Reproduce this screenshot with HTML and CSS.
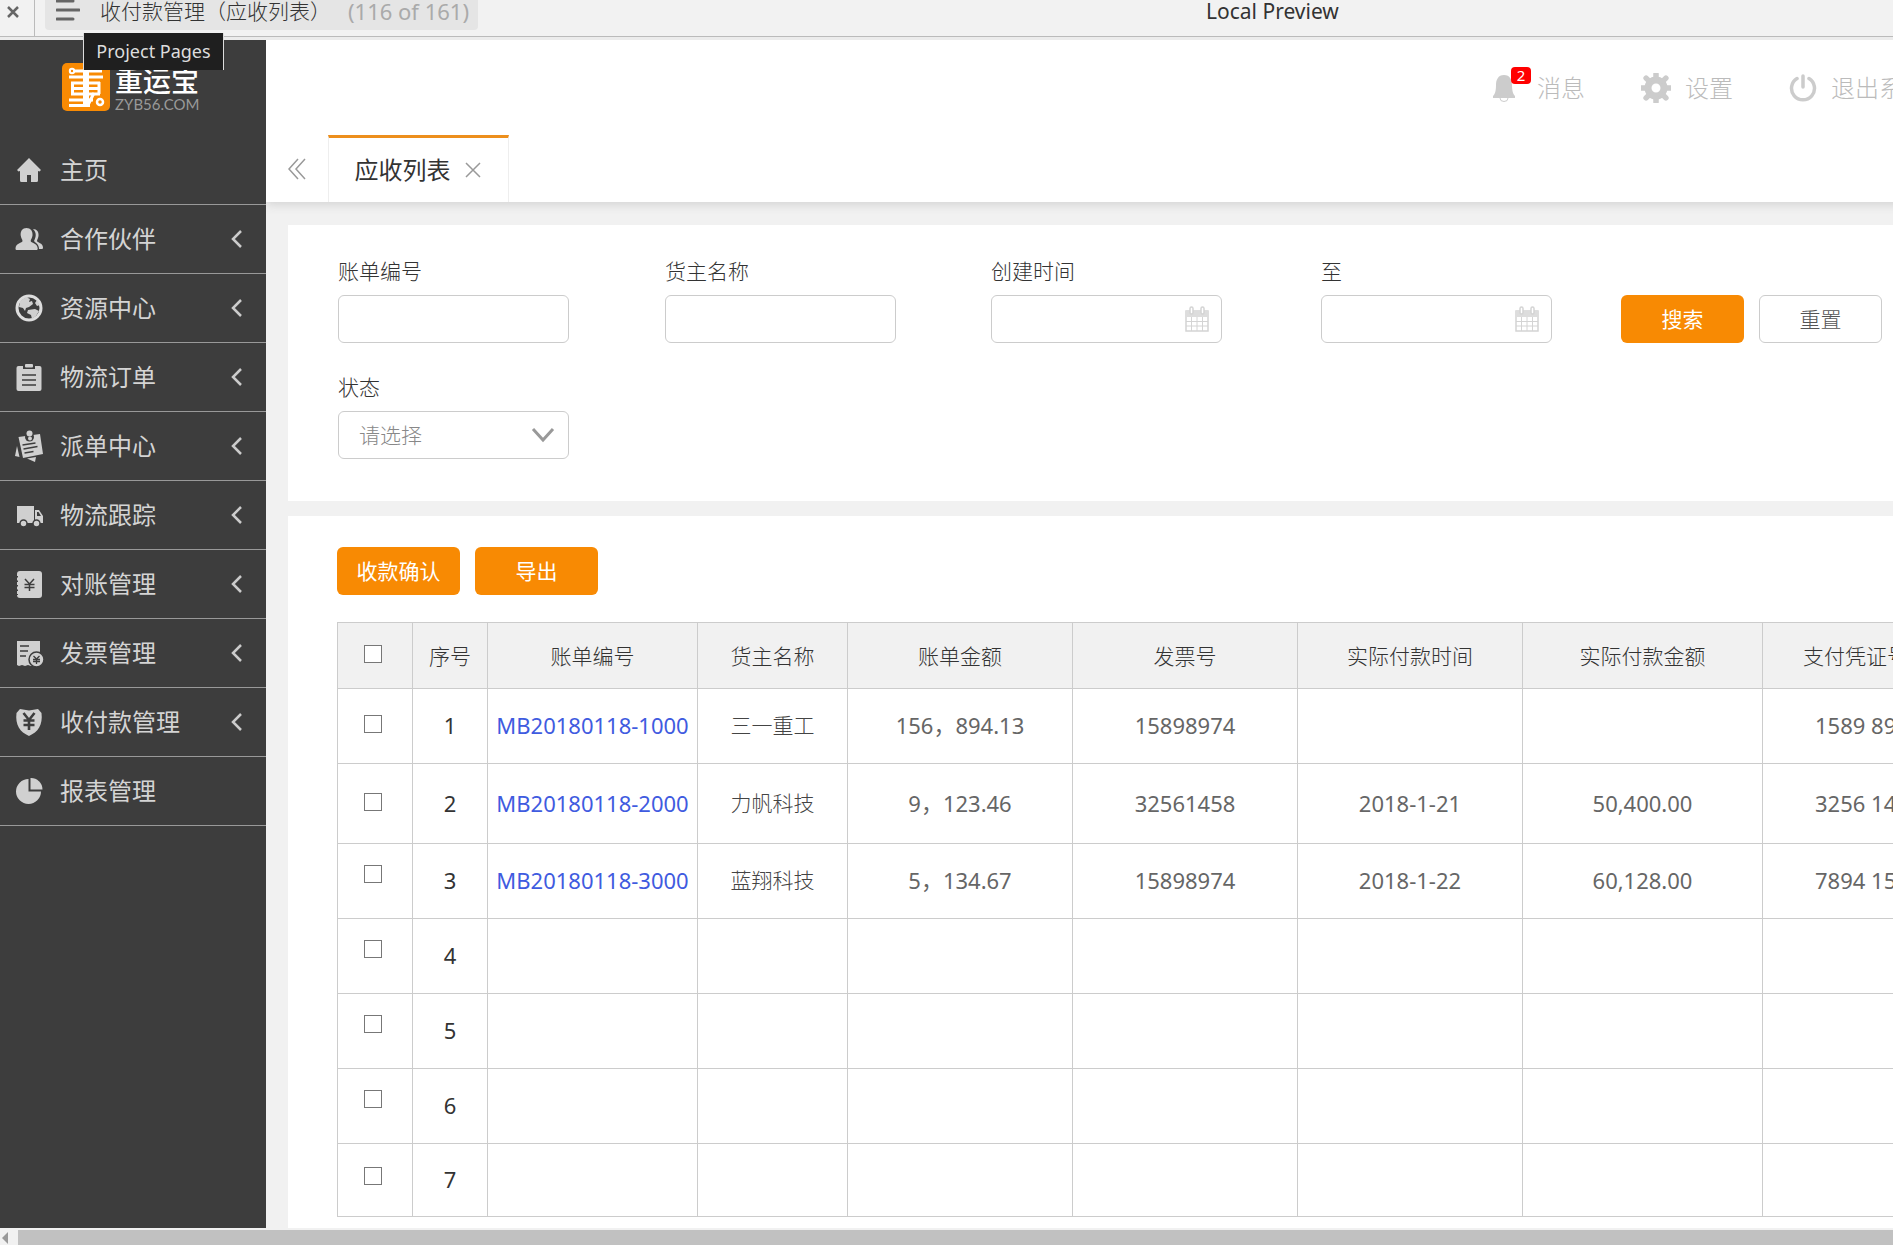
FILE: index.html
```html
<!DOCTYPE html>
<html lang="zh-CN">
<head>
<meta charset="utf-8">
<title>收付款管理（应收列表）</title>
<link rel="stylesheet" href="styles.css">
</head>
<body>
<div class="app">
  <header class="topbar">
    <button class="close" aria-label="关闭"><svg width="14" height="14" viewBox="0 0 14 14"><path d="M2 2l10 10M12 2L2 12" stroke="#666" stroke-width="2.5"/></svg></button>
    <div class="pages">
      <button class="pages-button" aria-describedby="pages-tip">
        <svg width="24" height="24" viewBox="0 0 24 24"><path d="M1 3h16M1 12h22M1 21h16" stroke="#666" stroke-width="3" stroke-linecap="round"/></svg>
        <span>收付款管理（应收列表）</span>
        <span class="count">(116 of 161)</span>
      </button>
      <div class="tooltip" id="pages-tip" role="tooltip">Project Pages</div>
    </div>
    <h1 class="preview-title">Local Preview</h1>
  </header>

  <div class="body">
    <aside class="sidebar">
      <div class="logo">
        <svg width="48" height="48" viewBox="0 0 48 48">
          <rect width="48" height="48" rx="5" fill="#f88a03"/>
          <g fill="none" stroke="#fff" stroke-width="3">
            <path d="M12 8h28M7 14h34M9 20h29M9 25.500h29M9 31h29M7 37h24M7 42.500h21"/>
            <path d="M24 6v36" stroke-width="6"/>
            <path d="M10.500 19v12M37 19v12M32 30l-6 12"/>
            <circle cx="10" cy="8" r="2.200" stroke-width="2"/>
            <circle cx="38" cy="39" r="3" stroke-width="2.500"/>
          </g>
        </svg>
        <div class="logo-text"><span class="logo-name">重运宝</span><span class="logo-site">ZYB56.COM</span></div>
      </div>
      <nav class="menu">
        <a href="#"><svg class="icon" viewBox="0 0 28 28"><path d="M14 2L2 14l1.500 1.500L5 15v9.500a1.500 1.500 0 0 0 1.500 1.500H12v-7h4v7h5.500a1.500 1.500 0 0 0 1.500-1.500V15l1.500.500L26 14z"/></svg><span>主页</span></a>
        <a href="#"><svg class="icon" viewBox="0 0 28 28"><path d="M18 4c4 0 6 3 5.500 7-.3 2.300-1.500 4-1.500 5 0 1.500 6 2 6 6.500 0 1-.5 1.500-1.500 1.500H24c0-5-3.500-6-5-8 2-4 3-8-1-12z"/><path d="M11.500 3c4 0 6.500 3 6 7.500-.3 2.500-1.800 4-1.800 5.500 0 2 7 2 7 7.500 0 1-.5 1.500-1.500 1.500H2c-1 0-1.500-.5-1.500-1.500C.500 18 7.500 18 7.500 16c0-1.500-1.500-3-1.800-5.500C5.200 6 7.500 3 11.500 3z"/></svg><span>合作伙伴</span><svg class="arrow" viewBox="0 0 12 20"><path d="M11 2L3 10l8 8"/></svg></a>
        <a href="#"><svg class="icon" viewBox="0 0 28 28"><circle cx="14" cy="14" r="12" fill="none" stroke="#ddd" stroke-width="3"/><path d="M5 7l6-4 4 2-1 3 3-1 1 3-4 3-3 1-1 3-2-3-4-1zM13 16l7-1 4 2-3 5-4 3-1-4-4-2zM22 6l3 5-3 1-2-3z"/></svg><span>资源中心</span><svg class="arrow" viewBox="0 0 12 20"><path d="M11 2L3 10l8 8"/></svg></a>
        <a href="#"><svg class="icon" viewBox="0 0 28 28"><rect x="1.500" y="3" width="25" height="25" rx="2"/><path d="M8 0h12v6H8z" fill="#3d3d3d"/><rect x="10" y="1" width="8" height="3.500" rx="1"/><path d="M7 12h14M7 17h14M7 22h14" stroke="#3d3d3d" stroke-width="1.500"/></svg><span>物流订单</span><svg class="arrow" viewBox="0 0 12 20"><path d="M11 2L3 10l8 8"/></svg></a>
        <a href="#"><svg class="icon" viewBox="0 0 28 28"><path d="M3.500 5L25 2l3 20-20 4zM2 14l2.500 11L0 24zM12 26.500l9-1.500-1 5z"/><circle cx="14.500" cy="5" r="4.500" fill="#3d3d3d"/><circle cx="14.500" cy="1.500" r="3"/><circle cx="15" cy="6.500" r="2"/><path d="M7.500 13l13-2M8.500 17l14-2.500M9.500 21l9-1.500" stroke="#3d3d3d" stroke-width="1.300"/></svg><span>派单中心</span><svg class="arrow" viewBox="0 0 12 20"><path d="M11 2L3 10l8 8"/></svg></a>
        <a href="#"><svg class="icon" viewBox="0 0 28 28"><path d="M2 5h17v17H2zM20 9h4l4 6v7h-8z"/><path d="M22 11h1.500l2.500 4h-4z" fill="#3d3d3d"/><g stroke="#3d3d3d" stroke-width="1.500"><circle cx="8.500" cy="22.500" r="3.500"/><circle cx="21.500" cy="22.500" r="3.500"/></g></svg><span>物流跟踪</span><svg class="arrow" viewBox="0 0 12 20"><path d="M11 2L3 10l8 8"/></svg></a>
        <a href="#"><svg class="icon" viewBox="0 0 28 28"><rect x="2" y="1" width="25" height="27" rx="3"/><path d="M2 6v19" stroke="#3d3d3d" stroke-width="2" stroke-dasharray="1.500 3"/><path d="M10 9l4.500 5L19 9M14.500 14v7M9.500 14.500h10M9.500 17.500h10" fill="none" stroke="#3d3d3d" stroke-width="1.500"/></svg><span>对账管理</span><svg class="arrow" viewBox="0 0 12 20"><path d="M11 2L3 10l8 8"/></svg></a>
        <a href="#"><svg class="icon" viewBox="0 0 28 28"><path d="M2 2h23v24l-3 1-3-1-3 1-3-1-3 1-3-1-3 1-2-1z"/><path d="M5 7h9M5 12h8M5 17h6" stroke="#3d3d3d" stroke-width="1.500"/><circle cx="21.500" cy="20.500" r="7.500" stroke="#3d3d3d" stroke-width="1.500"/><path d="M18.500 17l3 3 3-3M21.500 20v5M18 20.500h7M18 22.500h7" fill="none" stroke="#3d3d3d" stroke-width="1.300"/></svg><span>发票管理</span><svg class="arrow" viewBox="0 0 12 20"><path d="M11 2L3 10l8 8"/></svg></a>
        <a href="#"><svg class="icon" viewBox="0 0 28 28"><path d="M5 1l9 1.500L23 1l3.500 4C28 17 23 24 14 28 5 24 0 17 1.500 5z"/><path d="M8.500 5l5.500 7 5.500-7M14 12v10M8.500 12.500h11M8.500 17h11" fill="none" stroke="#3d3d3d" stroke-width="2.600"/></svg><span>收付款管理</span><svg class="arrow" viewBox="0 0 12 20"><path d="M11 2L3 10l8 8"/></svg></a>
        <a href="#"><svg class="icon" viewBox="0 0 28 28"><path d="M13.500 2a12.500 12.500 0 1 0 12.500 12.500H13.500z"/><path d="M15.500 1a11.500 11.500 0 0 1 12 11.500h-12z"/></svg><span>报表管理</span></a>
      </nav>
    </aside>

    <main class="main">
      <div class="canvas">
        <div class="head">
          <nav class="tools">
            <a href="#"><span class="bell"><svg width="24" height="28" viewBox="0 0 24 28"><path d="M12 1c6 0 8 5 8 10 0 6 1 9 3 11v2H1v-2c2-2 3-5 3-11C4 6 6 1 12 1z" fill="#ccc"/><path d="M8 24a4 3.500 0 0 0 8 0" fill="none" stroke="#ccc"/></svg><span class="badge">2</span></span>消息</a>
            <a href="#"><svg width="30" height="30" viewBox="0 0 30 30"><g fill="none" stroke="#ccc"><circle cx="15" cy="15" r="8" stroke-width="7"/><path d="M15 1v4M15 25v4M1 15h4M25 15h4M5.100 5.100l2.800 2.800M22.100 22.100l2.800 2.800M5.100 24.900l2.800-2.800M22.100 7.900l2.800-2.800" stroke-width="5.500" stroke-linecap="round"/></g></svg>设置</a>
            <a href="#"><svg width="28" height="28" viewBox="0 0 28 28"><path d="M8 4.500a11.500 11.500 0 1 0 12 0M14 2v11" fill="none" stroke="#ccc" stroke-width="3.500" stroke-linecap="round"/></svg>退出系统</a>
          </nav>
          <div class="tabs">
            <button class="back" aria-label="向左"><svg width="18" height="22" viewBox="0 0 18 22"><path d="M10 1L1 11l9 10M17 1L8 11l9 10" fill="none" stroke="#999" stroke-width="1.500"/></svg></button>
            <div class="tab"><a href="#">应收列表</a><button aria-label="关闭标签"><svg width="16" height="16" viewBox="0 0 16 16"><path d="M1 1l14 14M15 1L1 15" stroke="#999" stroke-width="1.500"/></svg></button></div>
          </div>
        </div>

        <form class="panel filters">
          <div class="field"><label for="bill">账单编号</label><input id="bill" type="text"></div>
          <div class="field"><label for="owner">货主名称</label><input id="owner" type="text"></div>
          <div class="field"><label for="from">创建时间</label><div class="date"><input id="from" type="text"><svg width="24" height="26" viewBox="0 0 24 26"><g fill="none" stroke="#d4d4d4" stroke-width="1.500"><path d="M1 5h22v20H1z"/><path d="M1 15.500h22M1 20h22M6.500 11v14M12 11v14M17.500 11v14" stroke-width="1"/><path d="M1 5h22v6H1z" fill="#ddd" stroke="none"/><rect x="5" y="1" width="3" height="7" rx="1.500" fill="#fff"/><rect x="16" y="1" width="3" height="7" rx="1.500" fill="#fff"/></g></svg></div></div>
          <div class="field"><label for="to">至</label><div class="date"><input id="to" type="text"><svg width="24" height="26" viewBox="0 0 24 26"><g fill="none" stroke="#d4d4d4" stroke-width="1.500"><path d="M1 5h22v20H1z"/><path d="M1 15.500h22M1 20h22M6.500 11v14M12 11v14M17.500 11v14" stroke-width="1"/><path d="M1 5h22v6H1z" fill="#ddd" stroke="none"/><rect x="5" y="1" width="3" height="7" rx="1.500" fill="#fff"/><rect x="16" y="1" width="3" height="7" rx="1.500" fill="#fff"/></g></svg></div></div>
          <div class="actions"><button class="btn" type="button">搜索</button><button class="btn plain" type="reset">重置</button></div>
          <div class="field"><label for="state">状态</label><div class="pick"><select id="state"><option>请选择</option></select><svg width="26" height="16" viewBox="0 0 26 16"><path d="M3 2l10 11L23 2" fill="none" stroke="#999" stroke-width="3"/></svg></div></div>
        </form>

        <section class="panel list">
          <div class="actions"><button class="btn">收款确认</button><button class="btn">导出</button></div>
          <table>
            <colgroup><col class="w-check"><col class="w-index"><col class="w-bill"><col class="w-owner"><col class="w-mid"><col class="w-mid"><col class="w-mid"><col class="w-paid"><col class="w-proof"></colgroup>
            <thead>
              <tr><th><input type="checkbox" aria-label="全选"></th><th>序号</th><th>账单编号</th><th>货主名称</th><th>账单金额</th><th>发票号</th><th>实际付款时间</th><th>实际付款金额</th><th class="proof">支付凭证号</th></tr>
            </thead>
            <tbody>
              <tr><td><input type="checkbox" aria-label="选择 1"></td><td>1</td><td><a href="#">MB20180118-1000</a></td><td>三一重工</td><td>156，894.13</td><td>15898974</td><td></td><td></td><td class="proof">1589 8974</td></tr>
              <tr class="tall"><td><input type="checkbox" aria-label="选择 2"></td><td>2</td><td><a href="#">MB20180118-2000</a></td><td>力帆科技</td><td>9，123.46</td><td>32561458</td><td>2018-1-21</td><td>50,400.00</td><td class="proof">3256 1458</td></tr>
              <tr class="raised"><td><input type="checkbox" aria-label="选择 3"></td><td>3</td><td><a href="#">MB20180118-3000</a></td><td>蓝翔科技</td><td>5，134.67</td><td>15898974</td><td>2018-1-22</td><td>60,128.00</td><td class="proof">7894 1589</td></tr>
              <tr class="raised"><td><input type="checkbox" aria-label="选择 4"></td><td>4</td><td></td><td></td><td></td><td></td><td></td><td></td><td></td></tr>
              <tr class="raised"><td><input type="checkbox" aria-label="选择 5"></td><td>5</td><td></td><td></td><td></td><td></td><td></td><td></td><td></td></tr>
              <tr class="raised"><td><input type="checkbox" aria-label="选择 6"></td><td>6</td><td></td><td></td><td></td><td></td><td></td><td></td><td></td></tr>
              <tr class="last"><td><input type="checkbox" aria-label="选择 7"></td><td>7</td><td></td><td></td><td></td><td></td><td></td><td></td><td></td></tr>
            </tbody>
          </table>
        </section>
      </div>
    </main>
  </div>

  <footer class="scrollbar"><svg width="18" height="15" viewBox="0 0 18 15"><path d="M8 2v12L2 8z" fill="#999"/></svg><div class="thumb"></div></footer>
</div>
</body>
</html>
```
FILE: styles.css
```css
* { box-sizing: border-box; }
body { margin: 0; font-family: "Noto Sans", "Noto Sans CJK SC", sans-serif; font-size: 21px; line-height: 30px; color: #333; }
button { border: 0; padding: 0; background: none; font: inherit; color: inherit; cursor: pointer; }
svg { display: block; flex: none; }
a { text-decoration: none; color: inherit; }

.app { min-height: 100vh; display: flex; flex-direction: column; overflow: hidden; background: #f1f1f1; }

.topbar { display: flex; align-items: flex-start; height: 40px; background: #f2f2f2; border-bottom: 3px solid #ececec; box-shadow: inset 0 -1px #bbb; white-space: nowrap; }
.close { width: 35px; height: 36px; padding: 2px 0 14px 6px; border-right: 1px solid #bbb; }
.pages { position: relative; margin-left: 10px; }
.pages-button { display: flex; align-items: flex-start; width: 433px; height: 30px; padding-left: 11px; background: #e5e5e5; border-radius: 0 0 4px 4px; line-height: 22px; text-align: left; font-weight: 300; }
.pages-button svg { margin: -2px 20px 0 0; }
.count { margin-left: auto; padding-right: 9px; color: #aaa; font-size: 22px; font-weight: 400; }
.tooltip { position: absolute; z-index: 2; left: 38px; top: 33px; width: 141px; height: 37px; background: #1f1f1f; border: 1px solid #ddd; border-top: 0; border-bottom: 0; color: #ddd; font-size: 18px; line-height: 36px; text-align: center; }
.preview-title { margin: 0 0 0 728px; font-size: 21px; font-weight: 400; line-height: 22px; }

.body { flex: 1; display: flex; }
.sidebar { flex: none; width: 266px; background: #3d3d3d; color: #d4d4d4; }
.logo { display: flex; gap: 5px; height: 96px; padding: 23px 0 0 62px; }
.logo-text { display: flex; flex-direction: column; padding-top: 4px; }
.logo-name { font-size: 28px; line-height: 28px; font-weight: 500; color: #fff; }
.logo-site { font-family: Lato, sans-serif; font-size: 15px; line-height: 18px; color: #999; }
.menu a { display: flex; align-items: center; height: 69px; padding: 0 24px 0 15px; border-bottom: 1px solid #999; font-size: 24px; }
.icon { width: 28px; height: 28px; margin-right: 17px; fill: #d0d0d0; overflow: visible; }
.arrow { width: 12px; height: 20px; margin-left: auto; fill: none; stroke: #ccc; stroke-width: 2.5; }

.main { flex: 1; min-width: 0; overflow: hidden; }
.canvas { min-width: 1700px; height: 100%; display: flex; flex-direction: column; }
.head { background: #fff; box-shadow: 0 2px 10px #d0d0d0; }
.tools { display: flex; justify-content: flex-end; gap: 56px; height: 95px; padding-right: 39px; color: #bbb; font-size: 24px; font-weight: 300; }
.tools a { display: flex; align-items: center; gap: 14px; }
.bell { position: relative; margin-right: 7px; }
.badge { position: absolute; left: 19px; top: -7px; width: 20px; height: 17px; border-radius: 4px; background: #f00; color: #fff; font-size: 15px; font-weight: 400; line-height: 17px; text-align: center; }
.tabs { display: flex; height: 67px; }
.back { width: 62px; padding-left: 22px; }
.tab { display: flex; align-items: center; justify-content: center; gap: 14px; width: 181px; padding-right: 2px; border: 1px solid #eee; border-top: 3px solid #ed8f1c; border-bottom: 0; font-size: 24px; }

.panel { margin-left: 22px; background: #fff; }
.filters { display: grid; grid-template-columns: 327px 326px 330px 300px 261px; row-gap: 29px; align-items: end; margin-top: 23px; padding: 31px 0 42px 50px; }
.field { display: grid; gap: 9px; width: 231px; font-weight: 300; }
.field input, .field select { width: 231px; height: 48px; border: 1px solid #ccc; border-radius: 6px; background: #fff; padding: 0 20px; font: inherit; color: #888; appearance: none; display: block; }
.date, .pick { display: grid; align-items: center; }
.date > *, .pick > * { grid-area: 1 / 1; }
.date svg { justify-self: end; margin-right: 13px; }
.pick svg { justify-self: end; margin-right: 13px; pointer-events: none; }
.actions { display: flex; gap: 15px; }
.btn { width: 123px; height: 48px; border-radius: 6px; background: #f88a03; color: #fff; }
.plain { background: #fff; border: 1px solid #ccc; color: #555; font-weight: 300; }

.list { flex: 1; margin-top: 15px; padding: 31px 0 11px 49px; }
table { table-layout: fixed; width: 1613px; margin-top: 27px; border-collapse: collapse; text-align: center; color: #666; }
.w-check, .w-index { width: 75px; }
.w-bill { width: 210px; }
.w-owner { width: 150px; }
.w-mid { width: 225px; }
.w-paid { width: 240px; }
th, td { border: 1px solid #ccc; padding: 0; white-space: nowrap; }
th { height: 66px; background: #f1f1f1; font-weight: 300; color: #333; }
td { height: 75px; padding-bottom: 2px; font-size: 22px; }
td:nth-child(2) { color: #333; }
td:nth-child(4) { font-size: 21px; font-weight: 300; color: #444; }
td a { color: #3f5be0; }
.tall td { height: 80px; }
.last td { height: 73px; }
.proof { padding-left: 40px; text-align: left; }
td.proof { padding-left: 52px; }
input[type="checkbox"] { appearance: none; display: block; width: 18px; height: 18px; margin: 0 auto; border: 1px solid #777; background: #fff; }
th:first-child, td:first-child { padding: 0 4px 4px 0; }
.raised td:first-child { padding-bottom: 15px; }
.last td:first-child { padding-bottom: 8px; }

.scrollbar { display: flex; align-items: stretch; height: 17px; padding-top: 2px; background: #f1f1f1; }
.thumb { flex: 1; background: #c1c1c1; }
```
